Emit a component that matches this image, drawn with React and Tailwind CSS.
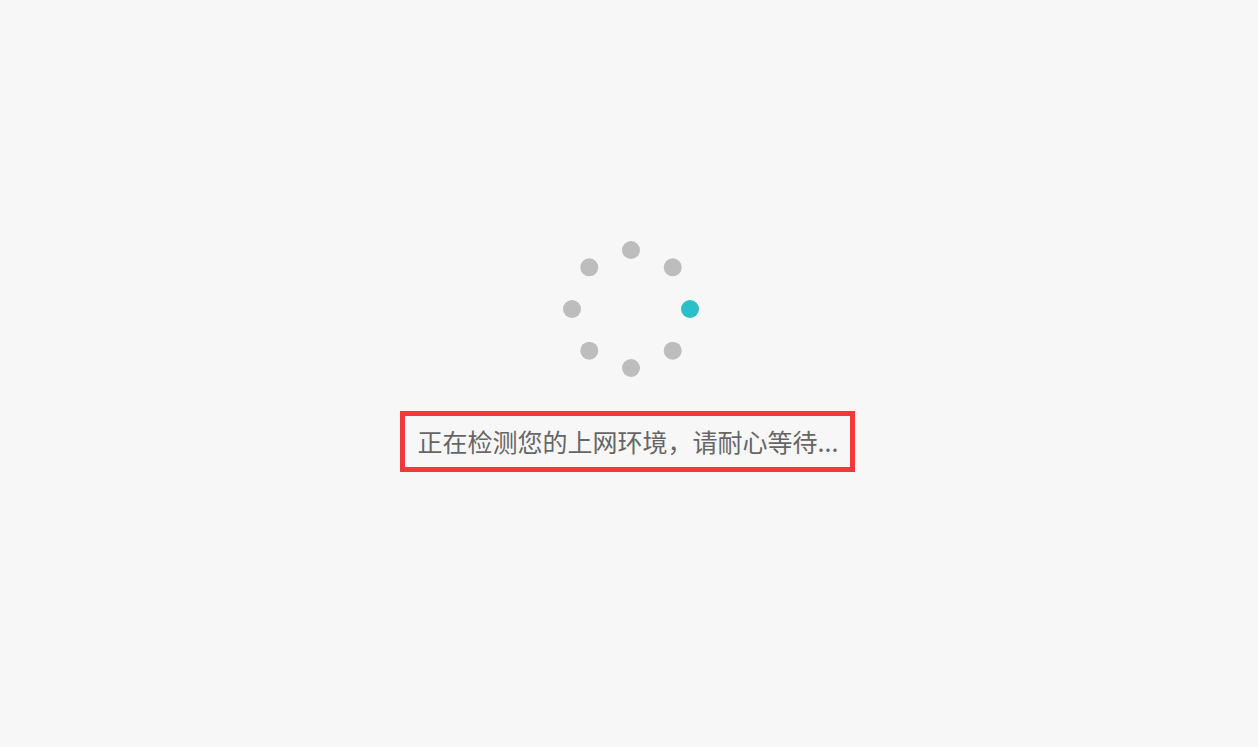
export default function App() {
  // 8 dots on a ring, the right one highlighted
  const dots = [0, 45, 90, 135, 180, 225, 270, 315];

  return (
    <div
      className="min-h-screen bg-[#f7f7f7] flex flex-col items-center pt-[241px]"
      style={{ fontFamily: '"Noto Sans CJK SC", "Noto Sans", sans-serif' }}
    >
      <svg width="136" height="136" viewBox="0 0 136 136" className="ml-[4px]">
        {dots.map((a) => {
          const r = (a * Math.PI) / 180;
          return (
            <circle
              key={a}
              cx={68 + 59 * Math.cos(r)}
              cy={68 + 59 * Math.sin(r)}
              r="9"
              fill={a === 0 ? "#2bbfca" : "#bdbdbd"}
            />
          );
        })}
      </svg>

      <div className="mt-[34px] mr-[3px] h-[61px] border-[5px] border-[#f2393b] pl-[13px] pr-[12px] flex items-center">
        <span className="text-[25px] text-[#666666] leading-none">
          正在检测您的上网环境，请耐心等待...
        </span>
      </div>
    </div>
  );
}
